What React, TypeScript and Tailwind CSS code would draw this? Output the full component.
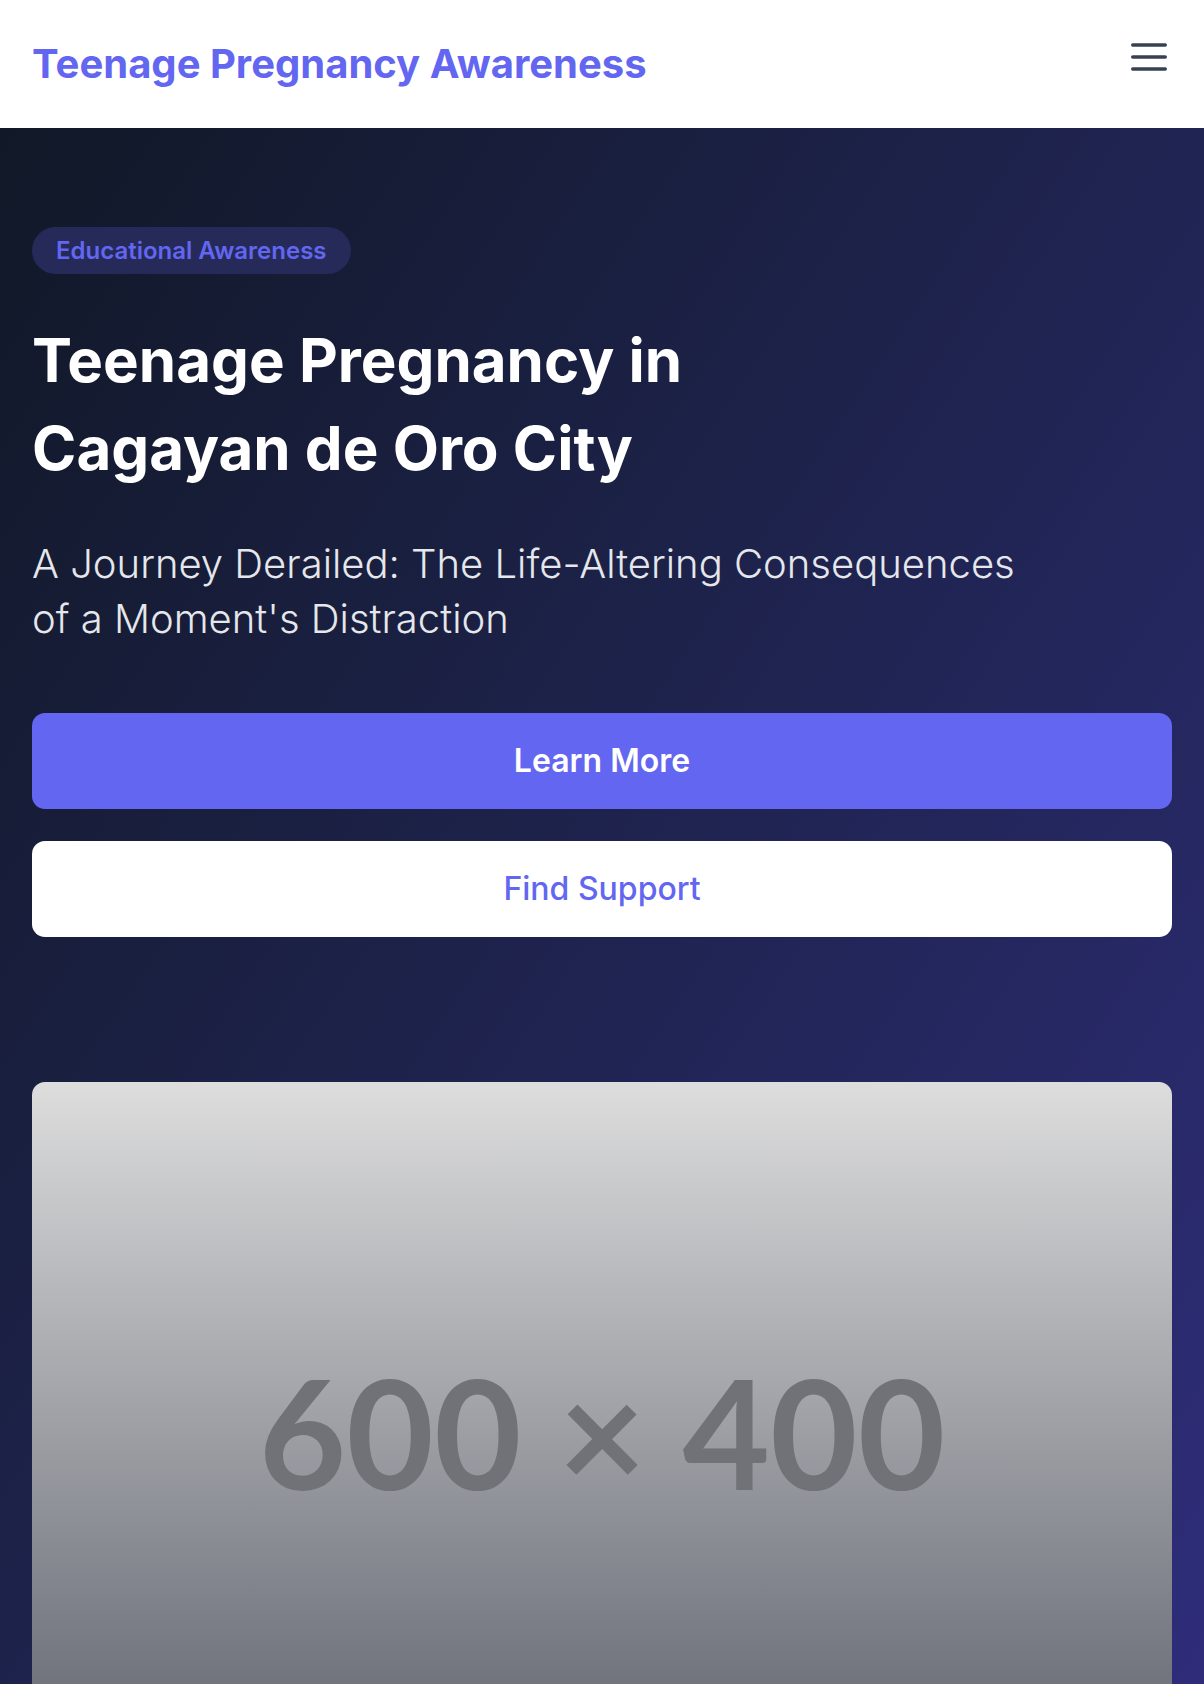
import { ReactNode } from "react";

function Header() {
  return (
    <header className="flex h-[128px] items-center justify-between bg-white px-[32px]">
      <h1 className="text-[40px] font-bold text-[#6366f1]">Teenage Pregnancy Awareness</h1>
      <button aria-label="Open menu" className="-mt-[14px] mr-[5px] text-[#374151]">
        <svg width="36" height="28" viewBox="0 0 36 28" fill="none">
          <path
            d="M1.75 2h32.5M1.75 14h32.5M1.75 26h32.5"
            stroke="currentColor"
            strokeWidth="3.5"
            strokeLinecap="round"
          />
        </svg>
      </button>
    </header>
  );
}

function HeroButton({ primary, children }: { primary?: boolean; children: ReactNode }) {
  return (
    <a
      href="#"
      className={
        primary
          ? "flex h-[96px] w-full items-center justify-center rounded-[13px] bg-[#6366f1] text-[32px] font-semibold text-white"
          : "flex h-[96px] w-full items-center justify-center rounded-[13px] bg-white text-[32px] font-medium text-[#6366f1]"
      }
    >
      {children}
    </a>
  );
}

function Placeholder() {
  return (
    <div className="mt-[145px] flex aspect-[3/2] w-full items-center justify-center overflow-hidden rounded-[13px] bg-gradient-to-b from-[#dddddd] to-[#575b66] pb-[62px]">
      <span className="font-['Lato',sans-serif] text-[151px] font-bold leading-none text-[#717278]">
        600 × 400
      </span>
    </div>
  );
}

export default function App() {
  return (
    <div className="min-h-screen bg-[#111827] font-['Inter',sans-serif]">
      <Header />
      <section className="bg-gradient-to-br from-[#111827] to-[#312e81] px-[32px] pb-[102px] pt-[99px]">
        <span className="inline-flex h-[47px] items-center rounded-full bg-[#252a59] px-[24px] text-[24px] font-semibold text-[#6366f1]">
          Educational Awareness
        </span>
        <h2 className="mt-[42px] text-[60px] font-bold leading-[88px] text-white">
          Teenage Pregnancy in
          <br />
          Cagayan de Oro City
        </h2>
        <p className="mt-[44px] max-w-[1005px] text-[40px] font-light leading-[55px] text-[#e5e7eb]">
          A Journey Derailed: The Life-Altering Consequences of a Moment's Distraction
        </p>
        <div className="mt-[67px] flex flex-col gap-[32px]">
          <HeroButton primary>Learn More</HeroButton>
          <HeroButton>Find Support</HeroButton>
        </div>
        <Placeholder />
      </section>
    </div>
  );
}
